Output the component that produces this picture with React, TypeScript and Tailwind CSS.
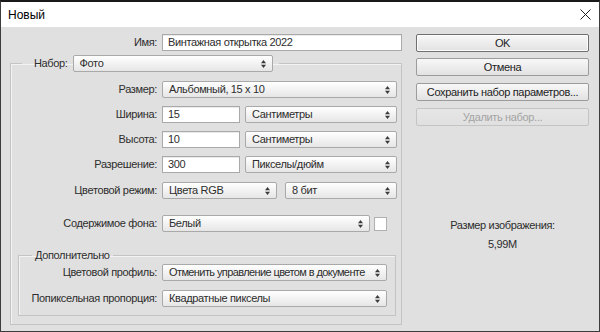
import type { ReactNode } from "react";

const font = "font-['Liberation_Sans',Arial,sans-serif]";

function Arrows() {
  return (
    <svg width="5" height="8" viewBox="0 0 5 8" className="shrink-0">
      <path d="M0 3.2 L2.5 0 L5 3.2Z" fill="#3a3a3a" />
      <path d="M0 4.8 L2.5 8 L5 4.8Z" fill="#3a3a3a" />
    </svg>
  );
}

function Select({ value, className, textClass = "" }: { value: string; className: string; textClass?: string }) {
  return (
    <div
      className={`flex h-[17px] shrink-0 items-center justify-between gap-[4px] rounded-[2px] border border-[#a9a9a9] bg-gradient-to-b from-white to-[#e6e6e6] pl-[6px] pr-[6px] ${className}`}
    >
      <span className={`whitespace-nowrap leading-none ${textClass}`}>{value}</span>
      <Arrows />
    </div>
  );
}

function Input({ value, className }: { value: string; className: string }) {
  return (
    <div
      className={`flex h-[17px] shrink-0 items-center border border-[#a9a9a9] bg-white pl-[5px] shadow-[inset_0_1px_0_#eaeaea] ${className}`}
    >
      <span className="leading-none">{value}</span>
    </div>
  );
}

function Row({ label, labelW, className = "", children }: { label: string; labelW: string; className?: string; children: ReactNode }) {
  return (
    <div className={`flex items-center ${className}`}>
      <div className={`shrink-0 pr-[5px] text-right ${labelW}`}>{label}</div>
      {children}
    </div>
  );
}

function Button({ children, primary, disabled, className = "" }: { children: ReactNode; primary?: boolean; disabled?: boolean; className?: string }) {
  return (
    <div
      className={`flex h-[18px] items-center justify-center rounded-[2px] border bg-gradient-to-b ${
        disabled
          ? "border-[#c4c4c4] from-[#e6e6e6] to-[#e0e0e0] text-[#a3a3a3]"
          : primary
          ? "border-[#6f6f6f] from-[#f8f8f8] to-[#e2e2e2] text-[#222] shadow-[inset_0_0_0_1px_#fdfdfd]"
          : "border-[#9c9c9c] from-[#f8f8f8] to-[#e2e2e2] text-[#222]"
      } ${className}`}
    >
      {children}
    </div>
  );
}

export default function App() {
  return (
    <div className={`flex h-[332px] w-[600px] flex-col overflow-hidden border border-t-2 border-[#3c3c3c] border-t-[#1a1a1a] text-[11px] tracking-[-0.35px] text-[#2d2d2d] ${font}`}>
      {/* title bar */}
      <div className="flex h-[25px] shrink-0 items-center justify-between bg-white pl-[7px] pr-[8px]">
        <span className="text-[12px] tracking-normal text-black">Новый</span>
        <svg width="11" height="11" viewBox="0 0 11 11">
          <path d="M0.5 0.5 L10.5 10.5 M10.5 0.5 L0.5 10.5" stroke="#222" strokeWidth="1" />
        </svg>
      </div>

      {/* body */}
      <div className="flex flex-1 bg-[#e0e0e0] pl-[9px] pt-[7px]">
        {/* left column */}
        <div className="flex w-[392px] flex-col">
          <Row label="Имя:" labelW="w-[152px]">
            <Input value="Винтажная открытка 2022" className="w-[240px]" />
          </Row>

          <fieldset className="mt-[4px] border border-[#c3c3c3] pb-[8px] pt-[9px] shadow-[inset_1px_1px_0_#f3f3f3]">
            <legend className="ml-[11px] flex items-center pl-[12px] pr-[6px]">
              <span className="pr-[5px]">Набор:</span>
              <Select value="Фото" className="w-[200px]" />
            </legend>

            <Row label="Размер:" labelW="w-[151px]">
              <Select value="Альбомный, 15 x 10" className="w-[235px]" />
            </Row>
            <Row label="Ширина:" labelW="w-[151px]" className="mt-[8px]">
              <Input value="15" className="w-[78px]" />
              <Select value="Сантиметры" className="ml-[5px] w-[152px]" />
            </Row>
            <Row label="Высота:" labelW="w-[151px]" className="mt-[8px]">
              <Input value="10" className="w-[78px]" />
              <Select value="Сантиметры" className="ml-[5px] w-[152px]" />
            </Row>
            <Row label="Разрешение:" labelW="w-[151px]" className="mt-[8px]">
              <Input value="300" className="w-[78px]" />
              <Select value="Пикселы/дюйм" className="ml-[5px] w-[152px]" />
            </Row>
            <Row label="Цветовой режим:" labelW="w-[151px]" className="mt-[9px]">
              <Select value="Цвета RGB" className="w-[115px]" />
              <Select value="8 бит" className="ml-[8px] w-[112px]" />
            </Row>
            <Row label="Содержимое фона:" labelW="w-[151px]" className="mt-[16px]">
              <Select value="Белый" className="w-[208px]" />
              <div className="ml-[4px] h-[14px] w-[13px] border border-[#b0b0b0] bg-white" />
            </Row>

            <fieldset className="ml-[7px] mr-[5px] mt-[17px] border border-[#c3c3c3] pb-[8px] pt-[2px] shadow-[inset_1px_1px_0_#f3f3f3]">
              <legend className="ml-[13px] px-[3px] leading-[13px]">Дополнительно</legend>
              <Row label="Цветовой профиль:" labelW="w-[143px]">
                <Select
                  value="Отменить управление цветом в документе"
                  className="w-[225px]"
                  textClass="tracking-[-0.6px]"
                />
              </Row>
              <Row label="Попиксельная пропорция:" labelW="w-[143px]" className="mt-[9px]">
                <Select value="Квадратные пикселы" className="w-[225px]" />
              </Row>
            </fieldset>
          </fieldset>
        </div>

        {/* right column */}
        <div className="ml-[14px] flex w-[173px] flex-col">
          <Button primary>OK</Button>
          <Button className="mt-[6px]">Отмена</Button>
          <Button className="mt-[7px]">Сохранить набор параметров...</Button>
          <Button disabled className="mt-[7px]">Удалить набор...</Button>
          <div className="mt-[93px] text-center leading-[13px]">Размер изображения:</div>
          <div className="mt-[6px] text-center leading-[13px]">5,99M</div>
        </div>
      </div>
    </div>
  );
}
